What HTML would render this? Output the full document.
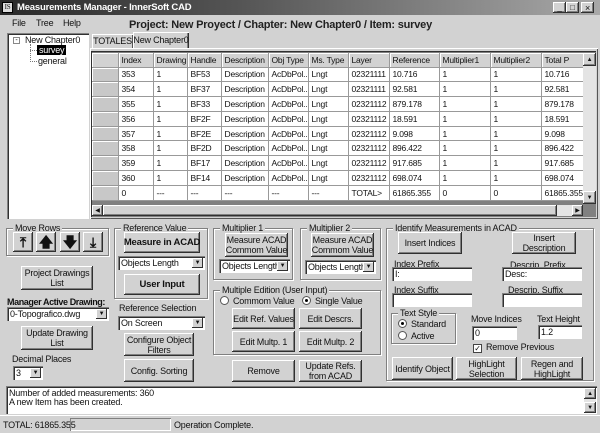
<!DOCTYPE html>
<html><head><style>
*{box-sizing:border-box;margin:0;padding:0}
body{width:600px;height:433px;background:#d2d2d2;font-family:"Liberation Sans",sans-serif;font-size:9px;letter-spacing:-0.2px;color:#111;position:relative;overflow:hidden}
.a{position:absolute;white-space:nowrap}
.btn{position:absolute;background:#d2d2d2;box-shadow:inset -1px -1px #303030,inset 1px 1px #fff,inset -2px -2px #808080;display:flex;align-items:center;justify-content:center;text-align:center;line-height:10px;font-size:9px;white-space:nowrap}
.in{position:absolute;background:#fff;box-shadow:inset 1px 1px #808080,inset 2px 2px #303030,inset -1px -1px #fff;padding:2px 0 0 3px;font-size:9px}
.cb{position:absolute;background:#fff;box-shadow:inset 1px 1px #808080,inset 2px 2px #303030;padding:2px 0 0 3px;font-size:9px;white-space:nowrap;overflow:hidden}
.cb:after{content:"▼";position:absolute;right:2px;top:2px;width:11px;height:10px;background:#d2d2d2;box-shadow:inset -1px -1px #303030,inset 1px 1px #fff;font-size:6px;text-align:center;line-height:10px}
.grp{position:absolute;border:1px solid #808080;box-shadow:1px 1px #fff,inset 1px 1px #fff}
.grp>span{position:absolute;top:-6px;left:6px;background:#d2d2d2;padding:0 2px;font-size:9px;line-height:10px;white-space:nowrap}
.rad{display:inline-block;width:9px;height:9px;border-radius:50%;background:#fff;border:1px solid #555;vertical-align:-1px;margin-right:4px;position:relative}
.rad.on:after{content:"";position:absolute;left:2px;top:2px;width:3px;height:3px;background:#000;border-radius:50%}
table{border-collapse:collapse;position:absolute;left:92px;top:53px;table-layout:fixed;width:491px}
td{height:14.8px;border-right:1px solid #999;border-bottom:1px solid #999;background:#fff;font-size:8.5px;padding-left:3px;overflow:hidden;white-space:nowrap}
tr.h td{background:#d2d2d2;height:14px;box-shadow:inset 1px 1px #fff}
td.rh{background:#c8c8c8;box-shadow:inset 1px 1px #fff}
</style></head><body>
<div class="a" style="left:0;top:0;width:600px;height:15px;background:linear-gradient(90deg,#2a2a2a,#555 40%,#a8a8a8)"></div>
<div class="a" style="left:2px;top:2px;width:11px;height:11px;background:#ddd;border:1px solid #000;font-size:7px;line-height:9px;text-align:center;font-family:'Liberation Serif',serif">IS</div>
<div class="a" style="left:17px;top:2px;color:#fff;font-weight:bold;font-size:9.5px">Measurements Manager - InnerSoft CAD</div>
<div class="btn" style="left:553px;top:2px;width:13px;height:11px;font-size:8px">_</div>
<div class="btn" style="left:566px;top:2px;width:13px;height:11px;font-size:8px">□</div>
<div class="btn" style="left:581px;top:2px;width:13px;height:11px;font-size:9px">×</div>
<div class="a" style="left:12px;top:18px">File</div>
<div class="a" style="left:36px;top:18px">Tree</div>
<div class="a" style="left:63px;top:18px">Help</div>
<div class="a" style="left:129px;top:19px;font-size:11px;font-weight:bold;color:#222">Project: New Proyect / Chapter: New Chapter0 / Item: survey</div>
<!-- tree -->
<div class="a" style="left:7px;top:33px;width:82px;height:186px;background:#fff;box-shadow:inset 1px 1px #808080,inset 2px 2px #303030"></div>
<div class="a" style="left:13px;top:37px;width:7px;height:7px;border:1px solid #888;font-size:7px;line-height:5px;text-align:center">-</div>
<div class="a" style="left:25px;top:35px">New Chapter0</div>
<div class="a" style="left:30px;top:44px;width:1px;height:18px;border-left:1px dotted #777"></div>
<div class="a" style="left:30px;top:50px;width:7px;border-top:1px dotted #777"></div>
<div class="a" style="left:30px;top:61px;width:7px;border-top:1px dotted #777"></div>
<div class="a" style="left:37px;top:45px;background:#000;color:#fff;padding:0 2px">survey</div>
<div class="a" style="left:38px;top:56px">general</div>
<!-- tabs -->
<div class="btn" style="left:92px;top:34px;width:41px;height:14px;box-shadow:inset 1px 1px #fff,inset -1px 0 #555">TOTALES</div>
<div class="btn" style="left:133px;top:32px;width:56px;height:16px;box-shadow:inset 1px 1px #fff,inset -1px 0 #303030,inset -2px 0 #808080">New Chapter0</div>
<div class="a" style="left:90px;top:48px;width:508px;height:171px;box-shadow:inset 1px 1px #fff,inset -1px -1px #555"></div>
<div class="a" style="left:91px;top:51px;width:505px;height:166px;background:#808080;box-shadow:inset 1px 1px #303030"></div>
<table>
<colgroup><col style="width:26px"><col style="width:35px"><col style="width:34px"><col style="width:34px"><col style="width:47px"><col style="width:40px"><col style="width:40px"><col style="width:41px"><col style="width:50px"><col style="width:51px"><col style="width:51px"><col style="width:42px"></colgroup>
<tr class="h"><td></td><td>Index</td><td>Drawing</td><td>Handle</td><td>Description</td><td>Obj Type</td><td>Ms. Type</td><td>Layer</td><td>Reference</td><td>Multiplier1</td><td>Multiplier2</td><td>Total P</td></tr>
<tr><td class="rh"></td><td>353</td><td>1</td><td>BF53</td><td>Description</td><td>AcDbPol...</td><td>Lngt</td><td>02321111</td><td>10.716</td><td>1</td><td>1</td><td>10.716</td></tr>
<tr><td class="rh"></td><td>354</td><td>1</td><td>BF37</td><td>Description</td><td>AcDbPol...</td><td>Lngt</td><td>02321111</td><td>92.581</td><td>1</td><td>1</td><td>92.581</td></tr>
<tr><td class="rh"></td><td>355</td><td>1</td><td>BF33</td><td>Description</td><td>AcDbPol...</td><td>Lngt</td><td>02321112</td><td>879.178</td><td>1</td><td>1</td><td>879.178</td></tr>
<tr><td class="rh"></td><td>356</td><td>1</td><td>BF2F</td><td>Description</td><td>AcDbPol...</td><td>Lngt</td><td>02321112</td><td>18.591</td><td>1</td><td>1</td><td>18.591</td></tr>
<tr><td class="rh"></td><td>357</td><td>1</td><td>BF2E</td><td>Description</td><td>AcDbPol...</td><td>Lngt</td><td>02321112</td><td>9.098</td><td>1</td><td>1</td><td>9.098</td></tr>
<tr><td class="rh"></td><td>358</td><td>1</td><td>BF2D</td><td>Description</td><td>AcDbPol...</td><td>Lngt</td><td>02321112</td><td>896.422</td><td>1</td><td>1</td><td>896.422</td></tr>
<tr><td class="rh"></td><td>359</td><td>1</td><td>BF17</td><td>Description</td><td>AcDbPol...</td><td>Lngt</td><td>02321112</td><td>917.685</td><td>1</td><td>1</td><td>917.685</td></tr>
<tr><td class="rh"></td><td>360</td><td>1</td><td>BF14</td><td>Description</td><td>AcDbPol...</td><td>Lngt</td><td>02321112</td><td>698.074</td><td>1</td><td>1</td><td>698.074</td></tr>
<tr><td class="rh"></td><td>0</td><td>---</td><td>---</td><td>---</td><td>---</td><td>---</td><td>TOTAL&gt;</td><td>61865.355</td><td>0</td><td>0</td><td>61865.355</td></tr>
</table>
<div class="a" style="left:583px;top:53px;width:13px;height:151px;background:#e4e4e4"></div>
<div class="btn" style="left:583px;top:53px;width:13px;height:13px;font-size:6px">▲</div>
<div class="btn" style="left:583px;top:191px;width:13px;height:13px;font-size:6px">▼</div>
<div class="a" style="left:92px;top:205px;width:491px;height:11px;background:#e4e4e4"></div>
<div class="btn" style="left:92px;top:205px;width:11px;height:11px;font-size:6px">◀</div>
<div class="btn" style="left:103px;top:205px;width:454px;height:11px"></div>
<div class="btn" style="left:572px;top:205px;width:11px;height:11px;font-size:6px">▶</div>
<!-- move rows -->
<div class="grp" style="left:6px;top:228px;width:103px;height:28px"><span>Move Rows</span></div>
<div class="btn" style="left:13px;top:232px;width:20px;height:20px;font-size:14px;font-weight:bold">⤒</div>
<div class="btn" style="left:36px;top:232px;width:20px;height:20px;font-size:14px;font-weight:bold">🡅</div>
<div class="btn" style="left:60px;top:232px;width:20px;height:20px;font-size:14px;font-weight:bold">🡇</div>
<div class="btn" style="left:83px;top:232px;width:20px;height:20px;font-size:14px;font-weight:bold">⤓</div>
<div class="btn" style="left:21px;top:266px;width:72px;height:24px">Project Drawings<br>List</div>
<div class="a" style="left:7px;top:297px;font-weight:bold;letter-spacing:-0.4px">Manager Active Drawing:</div>
<div class="cb" style="left:7px;top:307px;width:102px;height:14px">0-Topografico.dwg</div>
<div class="btn" style="left:21px;top:326px;width:72px;height:24px">Update Drawing<br>List</div>
<div class="a" style="left:12px;top:354px">Decimal Places</div>
<div class="cb" style="left:13px;top:366px;width:30px;height:14px">3</div>
<!-- reference value -->
<div class="grp" style="left:114px;top:228px;width:94px;height:71px"><span>Reference Value</span></div>
<div class="btn" style="left:124px;top:232px;width:76px;height:21px;font-weight:bold;font-size:9.5px">Measure in ACAD</div>
<div class="cb" style="left:118px;top:256px;width:87px;height:14px">Objects Length</div>
<div class="btn" style="left:124px;top:274px;width:76px;height:21px;font-weight:bold;font-size:9.5px">User Input</div>
<div class="a" style="left:119px;top:303px">Reference Selection</div>
<div class="cb" style="left:118px;top:316px;width:87px;height:14px">On Screen</div>
<div class="btn" style="left:124px;top:333px;width:70px;height:23px">Configure Object<br>Filters</div>
<div class="btn" style="left:124px;top:359px;width:70px;height:23px">Config. Sorting</div>
<!-- multipliers -->
<div class="grp" style="left:213px;top:228px;width:80px;height:52px"><span>Multiplier 1</span></div>
<div class="btn" style="left:225px;top:233px;width:63px;height:24px">Measure ACAD<br>Commom Value</div>
<div class="cb" style="left:219px;top:259px;width:71px;height:14px">Objects Length</div>
<div class="grp" style="left:300px;top:228px;width:81px;height:52px"><span>Multiplier 2</span></div>
<div class="btn" style="left:311px;top:233px;width:63px;height:24px">Measure ACAD<br>Commom Value</div>
<div class="cb" style="left:305px;top:260px;width:71px;height:14px">Objects Length</div>
<div class="grp" style="left:213px;top:290px;width:168px;height:65px"><span>Multiple Edition (User Input)</span></div>
<div class="a" style="left:220px;top:296px"><span class="rad"></span>Commom Value</div>
<div class="a" style="left:302px;top:296px"><span class="rad on"></span>Single Value</div>
<div class="btn" style="left:232px;top:308px;width:63px;height:21px">Edit Ref. Values</div>
<div class="btn" style="left:299px;top:308px;width:63px;height:21px">Edit Descrs.</div>
<div class="btn" style="left:232px;top:331px;width:63px;height:21px">Edit Multp. 1</div>
<div class="btn" style="left:299px;top:331px;width:63px;height:21px">Edit Multp. 2</div>
<div class="btn" style="left:232px;top:360px;width:63px;height:22px">Remove</div>
<div class="btn" style="left:299px;top:360px;width:63px;height:22px">Update Refs.<br>from ACAD</div>
<!-- identify -->
<div class="grp" style="left:386px;top:228px;width:208px;height:153px"><span>Identify Measurements in ACAD</span></div>
<div class="btn" style="left:398px;top:232px;width:64px;height:22px">Insert Indices</div>
<div class="btn" style="left:512px;top:232px;width:64px;height:22px">Insert<br>Description</div>
<div class="a" style="left:394px;top:259px">Index Prefix</div>
<div class="in" style="left:392px;top:267px;width:80px;height:14px">I:</div>
<div class="a" style="left:510px;top:260px">Descrip. Prefix</div>
<div class="in" style="left:502px;top:267px;width:80px;height:14px">Desc:</div>
<div class="a" style="left:394px;top:285px">Index Suffix</div>
<div class="in" style="left:392px;top:293px;width:80px;height:14px"></div>
<div class="a" style="left:508px;top:285px">Descrip. Suffix</div>
<div class="in" style="left:502px;top:293px;width:80px;height:14px"></div>
<div class="grp" style="left:391px;top:313px;width:65px;height:31px"><span>Text Style</span></div>
<div class="a" style="left:398px;top:319px"><span class="rad on"></span>Standard</div>
<div class="a" style="left:398px;top:331px"><span class="rad"></span>Active</div>
<div class="a" style="left:471px;top:314px">Move Indices</div>
<div class="in" style="left:472px;top:326px;width:45px;height:14px">0</div>
<div class="a" style="left:537px;top:314px">Text Height</div>
<div class="in" style="left:538px;top:325px;width:44px;height:14px">1.2</div>
<div class="a" style="left:473px;top:342px"><span style="display:inline-block;width:9px;height:9px;background:#fff;border:1px solid #444;font-size:8px;line-height:7px;text-align:center;vertical-align:-1px;margin-right:4px">✓</span>Remove Previous</div>
<div class="btn" style="left:392px;top:357px;width:61px;height:23px">Identify Object</div>
<div class="btn" style="left:456px;top:357px;width:61px;height:23px">HighLight<br>Selection</div>
<div class="btn" style="left:521px;top:357px;width:62px;height:23px">Regen and<br>HighLight</div>
<!-- message -->
<div class="a" style="left:6px;top:386px;width:591px;height:28px;background:#fff;box-shadow:inset 1px 1px #808080,inset 2px 2px #303030"></div>
<div class="a" style="left:9px;top:389px;line-height:9px">Number of added measurements: 360<br>A new Item has been created.</div>
<div class="a" style="left:584px;top:388px;width:12px;height:25px;background:#e4e4e4"></div>
<div class="btn" style="left:584px;top:388px;width:12px;height:11px;font-size:6px">▲</div>
<div class="btn" style="left:584px;top:402px;width:12px;height:11px;font-size:6px">▼</div>
<!-- status -->
<div class="a" style="left:0;top:415px;width:600px;height:18px;border-top:1px solid #fff"></div>
<div class="a" style="left:3px;top:420px">TOTAL: 61865.355</div>
<div class="a" style="left:70px;top:418px;width:101px;height:13px;box-shadow:inset 1px 1px #808080,inset -1px -1px #fff"></div>
<div class="a" style="left:174px;top:420px">Operation Complete.</div>
</body></html>
